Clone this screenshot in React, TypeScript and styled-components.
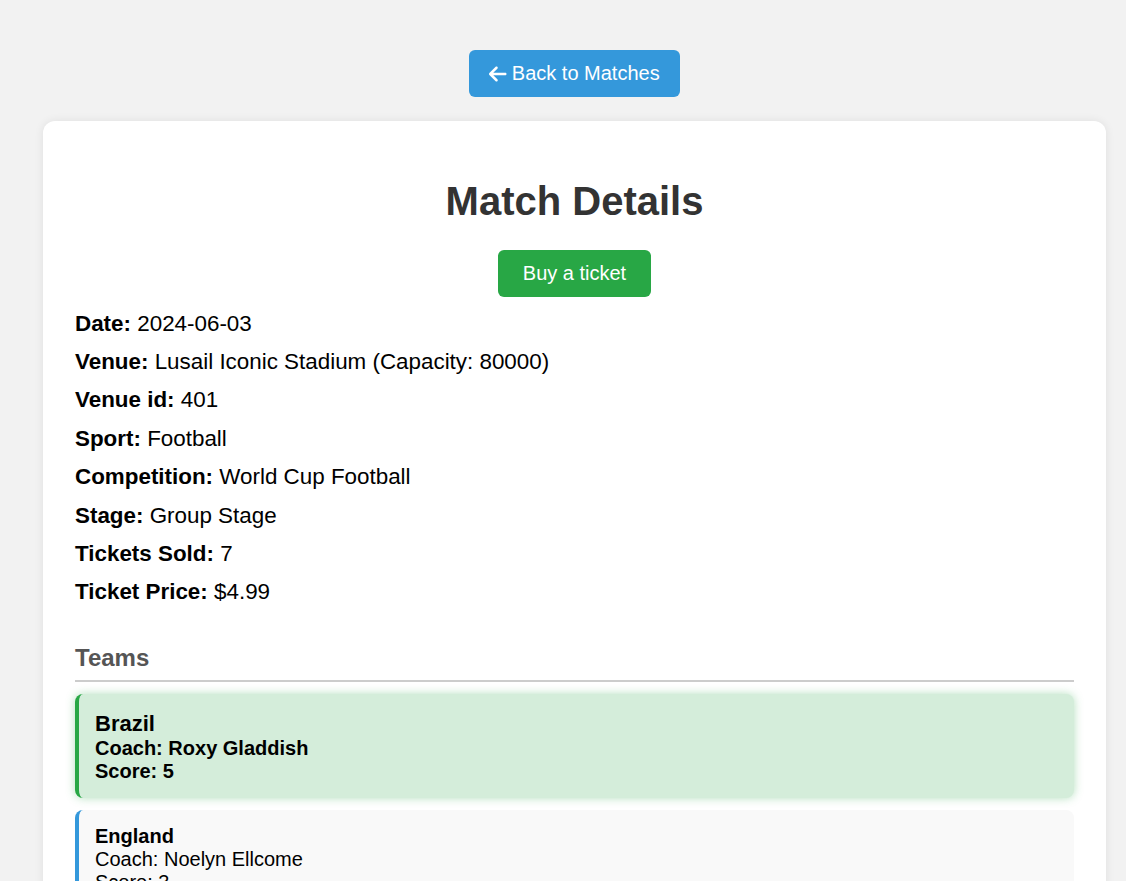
import React from "react";
import styled, { createGlobalStyle } from "styled-components";
import { FaArrowLeft } from "react-icons/fa6";

const GlobalStyle = createGlobalStyle`
  html, body {
    margin: 0;
    padding: 0;
    background: #f2f2f2;
    font-family: "Liberation Sans", Arial, Helvetica, sans-serif;
    color: #000;
  }
`;

const Page = styled.div`
  padding: 50px 20px 40px 43px;
  display: flex;
  flex-direction: column;
  align-items: center;
`;

const BackButton = styled.button`
  display: inline-flex;
  align-items: center;
  gap: 5px;
  background: #3498db;
  color: #fff;
  border: none;
  border-radius: 6px;
  padding: 12px 20px;
  font-family: inherit;
  font-size: 20px;
  line-height: 23px;
  cursor: pointer;
  margin-bottom: 24px;
  svg {
    width: 17.5px;
    height: 20px;
  }
`;

const Card = styled.div`
  align-self: stretch;
  background: #fff;
  border-radius: 12px;
  box-shadow: 0 0 10px rgba(0, 0, 0, 0.08);
  padding: 30px 32px 32px;
  display: flex;
  flex-direction: column;
`;

const Title = styled.h1`
  margin: 26.5px 0 26.5px;
  font-size: 40px;
  font-weight: bold;
  line-height: 46px;
  color: #333;
  text-align: center;
`;

const BuyButton = styled.button`
  align-self: center;
  background: #28a745;
  color: #fff;
  border: none;
  border-radius: 6px;
  padding: 12px 25px;
  font-family: inherit;
  font-size: 20px;
  line-height: 23px;
  cursor: pointer;
  margin-bottom: 7.5px;
`;

const DetailList = styled.div`
  display: flex;
  flex-direction: column;
`;

const DetailRow = styled.p`
  margin: 0;
  font-size: 22.4px;
  line-height: 38.4px;
`;

const Label = styled.strong`
  font-weight: bold;
`;

const SectionTitle = styled.h2`
  margin: 32.5px 0 0;
  padding-bottom: 8px;
  border-bottom: 2px solid #ccc;
  font-size: 24px;
  line-height: 27.6px;
  font-weight: bold;
  color: #555;
`;

const TeamList = styled.div`
  margin-top: 12px;
  display: flex;
  flex-direction: column;
  gap: 12px;
`;

const TeamCard = styled.div<{ $winner?: boolean }>`
  border-left: 4px solid ${(p) => (p.$winner ? "#28a745" : "#3498db")};
  background: ${(p) => (p.$winner ? "#d4edda" : "#f9f9f9")};
  border-radius: 8px;
  padding: ${(p) => (p.$winner ? "17.5px 16px 15px" : "15px 16px")};
  box-shadow: ${(p) => (p.$winner ? "0 0 10px rgba(40, 167, 69, 0.35)" : "none")};
  font-size: 20px;
  line-height: 23px;
  font-weight: ${(p) => (p.$winner ? "bold" : "normal")};
`;

const TeamName = styled.div<{ $winner?: boolean }>`
  font-weight: bold;
  font-size: ${(p) => (p.$winner ? "22px" : "20px")};
  line-height: ${(p) => (p.$winner ? "25.3px" : "23px")};
`;

const details: [string, string][] = [
  ["Date:", "2024-06-03"],
  ["Venue:", "Lusail Iconic Stadium (Capacity: 80000)"],
  ["Venue id:", "401"],
  ["Sport:", "Football"],
  ["Competition:", "World Cup Football"],
  ["Stage:", "Group Stage"],
  ["Tickets Sold:", "7"],
  ["Ticket Price:", "$4.99"],
];

const teams = [
  { name: "Brazil", coach: "Roxy Gladdish", score: 5, winner: true },
  { name: "England", coach: "Noelyn Ellcome", score: 3, winner: false },
];

export default function App() {
  return (
    <>
      <GlobalStyle />
      <Page>
        <BackButton>
          <FaArrowLeft />
          <span>Back to Matches</span>
        </BackButton>
        <Card>
          <Title>Match Details</Title>
          <BuyButton>Buy a ticket</BuyButton>
          <DetailList>
            {details.map(([label, value]) => (
              <DetailRow key={label}>
                <Label>{label}</Label> {value}
              </DetailRow>
            ))}
          </DetailList>
          <SectionTitle>Teams</SectionTitle>
          <TeamList>
            {teams.map((t) => (
              <TeamCard key={t.name} $winner={t.winner}>
                <TeamName $winner={t.winner}>{t.name}</TeamName>
                <div>Coach: {t.coach}</div>
                <div>Score: {t.score}</div>
              </TeamCard>
            ))}
          </TeamList>
        </Card>
      </Page>
    </>
  );
}
